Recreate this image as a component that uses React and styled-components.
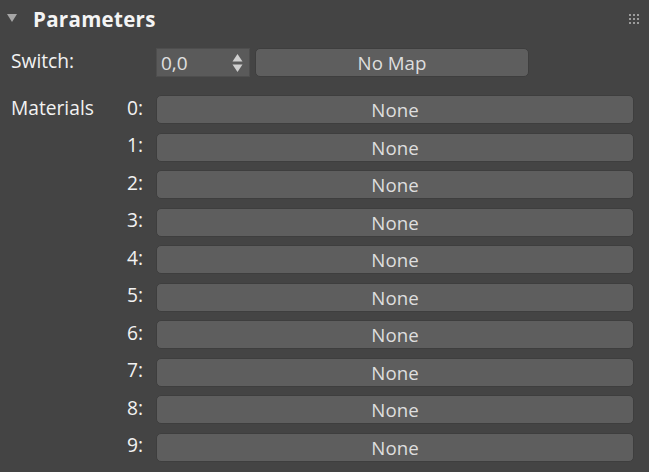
import styled, { createGlobalStyle } from "styled-components"

const GlobalStyle = createGlobalStyle`
  html, body {
    margin: 0;
    padding: 0;
    background: #444444;
  }
  body {
    font-family: "Open Sans", "Noto Sans", sans-serif;
  }
`

const Panel = styled.div`
  height: 472px;
  box-sizing: border-box;
  background: #444444;
  color: #f2f2f2;
  overflow: hidden;
`

const Header = styled.div`
  display: flex;
  align-items: center;
  height: 38px;
  padding: 0 10px 0 7px;
`

const Triangle = styled.svg`
  width: 10px;
  height: 8px;
  margin-right: 16px;
  margin-top: -2px;
`

const Title = styled.h2`
  flex: 1;
  margin: 0;
  font-size: 20.5px;
  font-weight: 700;
  color: #f4f4f4;
  letter-spacing: 0.3px;
`

const Grip = styled.div`
  display: grid;
  grid-template-columns: repeat(3, 2px);
  grid-auto-rows: 2px;
  gap: 2px;

  span {
    background: #9c9c9c;
  }
`

const Section = styled.div`
  display: grid;
  grid-template-columns: 100px 45px 1fr;
  grid-auto-rows: 29px;
  row-gap: 8.5px;
  padding: ${(p) => (p.$first ? "10px" : "18px")} 15px 0 11px;
`

const Label = styled.div`
  grid-column: ${(p) => (p.$wide ? "1 / 3" : "1")};
  display: flex;
  align-items: center;
  padding-bottom: 5px;
  font-size: 19.2px;
  color: #f2f2f2;
`

const Index = styled.div`
  grid-column: 2;
  display: flex;
  align-items: center;
  justify-content: flex-end;
  padding: 0 13px 5px 0;
  font-size: 19.2px;
  color: #f2f2f2;
`

const Controls = styled.div`
  grid-column: 3;
  display: flex;
  gap: 5px;
`

const Spinner = styled.div`
  width: 94px;
  display: flex;
  align-items: center;
  justify-content: space-between;
  box-sizing: border-box;
  padding: 0 6px 0 4px;
  background: #5a5a5a;
  border: 1px solid #4e4e4e;
  font-size: 19px;
  color: #e0e0e0;
`

const Arrows = styled.svg`
  width: 11px;
  height: 20px;
`

const MapButton = styled.div`
  grid-column: ${(p) => (p.$inRow ? "auto" : "3")};
  width: ${(p) => (p.$width ? `${p.$width}px` : "auto")};
  display: flex;
  align-items: center;
  justify-content: center;
  box-sizing: border-box;
  background: #5e5e5e;
  border: 1px solid #3e3e3e;
  border-radius: 5px;
  font-size: 18.7px;
  color: #dedede;
`

const slots = [0, 1, 2, 3, 4, 5, 6, 7, 8, 9]

const App = () => {
  return (
    <Panel>
      <GlobalStyle />
      <Header>
        <Triangle viewBox="0 0 10 8">
          <polygon points="0,0 10,0 5,8" fill="#a6a6a6" />
        </Triangle>
        <Title>Parameters</Title>
        <Grip>
          {Array.from({ length: 9 }).map((_, i) => (
            <span key={i} />
          ))}
        </Grip>
      </Header>
      <Section $first>
        <Label $wide>Switch:</Label>
        <Controls>
          <Spinner>
            0,0
            <Arrows viewBox="0 0 11 20">
              <polygon points="5.5,1 10.5,8.5 0.5,8.5" fill="#cfcfcf" />
              <polygon points="0.5,11.5 10.5,11.5 5.5,19" fill="#cfcfcf" />
            </Arrows>
          </Spinner>
          <MapButton $inRow $width={274}>
            No Map
          </MapButton>
        </Controls>
      </Section>
      <Section>
        <Label>Materials</Label>
        {slots.map((n) => [
          <Index key={`i${n}`}>{n}:</Index>,
          <MapButton key={`b${n}`}>None</MapButton>,
        ])}
      </Section>
    </Panel>
  )
}

export default App
